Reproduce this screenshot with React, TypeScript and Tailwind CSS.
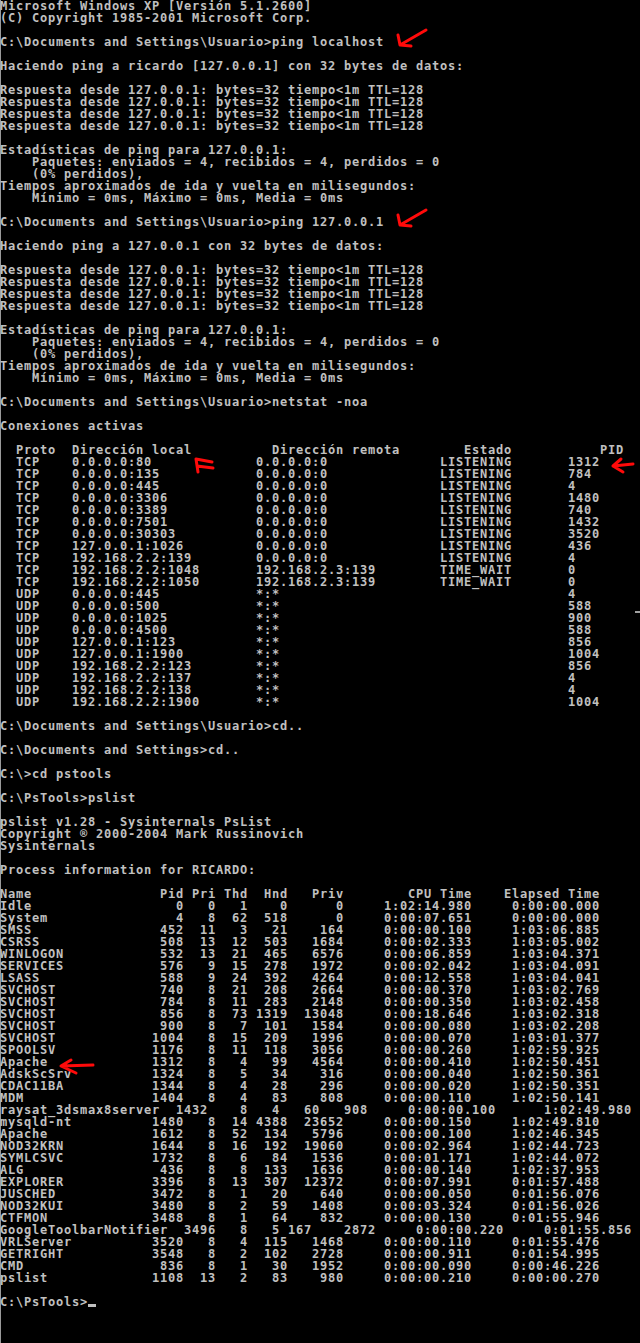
import React from 'react'

type Conn = [string, string, string, string, string]
type Proc = [string, string, string, string, string, string, string, string]

const conns: Conn[] = [
  ['TCP', '0.0.0.0:80', '0.0.0.0:0', 'LISTENING', '1312'],
  ['TCP', '0.0.0.0:135', '0.0.0.0:0', 'LISTENING', '784'],
  ['TCP', '0.0.0.0:445', '0.0.0.0:0', 'LISTENING', '4'],
  ['TCP', '0.0.0.0:3306', '0.0.0.0:0', 'LISTENING', '1480'],
  ['TCP', '0.0.0.0:3389', '0.0.0.0:0', 'LISTENING', '740'],
  ['TCP', '0.0.0.0:7501', '0.0.0.0:0', 'LISTENING', '1432'],
  ['TCP', '0.0.0.0:30303', '0.0.0.0:0', 'LISTENING', '3520'],
  ['TCP', '127.0.0.1:1026', '0.0.0.0:0', 'LISTENING', '436'],
  ['TCP', '192.168.2.2:139', '0.0.0.0:0', 'LISTENING', '4'],
  ['TCP', '192.168.2.2:1048', '192.168.2.3:139', 'TIME_WAIT', '0'],
  ['TCP', '192.168.2.2:1050', '192.168.2.3:139', 'TIME_WAIT', '0'],
  ['UDP', '0.0.0.0:445', '*:*', '', '4'],
  ['UDP', '0.0.0.0:500', '*:*', '', '588'],
  ['UDP', '0.0.0.0:1025', '*:*', '', '900'],
  ['UDP', '0.0.0.0:4500', '*:*', '', '588'],
  ['UDP', '127.0.0.1:123', '*:*', '', '856'],
  ['UDP', '127.0.0.1:1900', '*:*', '', '1004'],
  ['UDP', '192.168.2.2:123', '*:*', '', '856'],
  ['UDP', '192.168.2.2:137', '*:*', '', '4'],
  ['UDP', '192.168.2.2:138', '*:*', '', '4'],
  ['UDP', '192.168.2.2:1900', '*:*', '', '1004'],
]

const procs: (Proc | string)[] = [
  ['Idle', '0', '0', '1', '0', '0', '1:02:14.980', '0:00:00.000'],
  ['System', '4', '8', '62', '518', '0', '0:00:07.651', '0:00:00.000'],
  ['SMSS', '452', '11', '3', '21', '164', '0:00:00.100', '1:03:06.885'],
  ['CSRSS', '508', '13', '12', '503', '1684', '0:00:02.333', '1:03:05.002'],
  ['WINLOGON', '532', '13', '21', '465', '6576', '0:00:06.859', '1:03:04.371'],
  ['SERVICES', '576', '9', '15', '278', '1972', '0:00:02.042', '1:03:04.091'],
  ['LSASS', '588', '9', '24', '392', '4264', '0:00:12.558', '1:03:04.041'],
  ['SVCHOST', '740', '8', '21', '208', '2664', '0:00:00.370', '1:03:02.769'],
  ['SVCHOST', '784', '8', '11', '283', '2148', '0:00:00.350', '1:03:02.458'],
  ['SVCHOST', '856', '8', '73', '1319', '13048', '0:00:18.646', '1:03:02.318'],
  ['SVCHOST', '900', '8', '7', '101', '1584', '0:00:00.080', '1:03:02.208'],
  ['SVCHOST', '1004', '8', '15', '209', '1996', '0:00:00.070', '1:03:01.377'],
  ['SPOOLSV', '1176', '8', '11', '118', '3056', '0:00:00.260', '1:02:59.925'],
  ['Apache', '1312', '8', '4', '99', '4564', '0:00:00.410', '1:02:50.451'],
  ['AdskScSrv', '1324', '8', '5', '34', '316', '0:00:00.040', '1:02:50.361'],
  ['CDAC11BA', '1344', '8', '4', '28', '296', '0:00:00.020', '1:02:50.351'],
  ['MDM', '1404', '8', '4', '83', '808', '0:00:00.110', '1:02:50.141'],
  'raysat_3dsmax8server  1432    8   4   60   908     0:00:00.100      1:02:49.980',
  ['mysqld-nt', '1480', '8', '14', '4388', '23652', '0:00:00.150', '1:02:49.810'],
  ['Apache', '1612', '8', '52', '134', '5796', '0:00:00.100', '1:02:46.345'],
  ['NOD32KRN', '1644', '8', '16', '192', '19060', '0:00:02.964', '1:02:44.723'],
  ['SYMLCSVC', '1732', '8', '6', '84', '1536', '0:00:01.171', '1:02:44.072'],
  ['ALG', '436', '8', '8', '133', '1636', '0:00:00.140', '1:02:37.953'],
  ['EXPLORER', '3396', '8', '13', '307', '12372', '0:00:07.991', '0:01:57.488'],
  ['JUSCHED', '3472', '8', '1', '20', '640', '0:00:00.050', '0:01:56.076'],
  ['NOD32KUI', '3480', '8', '2', '59', '1408', '0:00:03.324', '0:01:56.026'],
  ['CTFMON', '3488', '8', '1', '64', '832', '0:00:00.130', '0:01:55.946'],
  'GoogleToolbarNotifier  3496   8   5 167    2872     0:00:00.220     0:01:55.856',
  ['VRLServer', '3520', '8', '4', '115', '1468', '0:00:00.110', '0:01:55.476'],
  ['GETRIGHT', '3548', '8', '2', '102', '2728', '0:00:00.911', '0:01:54.995'],
  ['CMD', '836', '8', '1', '30', '1952', '0:00:00.090', '0:00:46.226'],
  ['pslist', '1108', '13', '2', '83', '980', '0:00:00.210', '0:00:00.270'],
]

function procLine(p: Proc) {
  return (
    p[0].padEnd(19) +
    p[1].padStart(4) +
    p[2].padStart(4) +
    p[3].padStart(4) +
    p[4].padStart(5) +
    p[5].padStart(7) +
    p[6].padStart(16) +
    p[7].padStart(16)
  )
}

function connLine(c: Conn) {
  return '  ' + c[0].padEnd(7) + c[1].padEnd(23) + c[2].padEnd(23) + c[3].padEnd(16) + c[4]
}

const ping = (host: string) => [
  'C:\\Documents and Settings\\Usuario>ping ' + host,
  '',
  host === 'localhost'
    ? 'Haciendo ping a ricardo [127.0.0.1] con 32 bytes de datos:'
    : 'Haciendo ping a 127.0.0.1 con 32 bytes de datos:',
  '',
  'Respuesta desde 127.0.0.1: bytes=32 tiempo<1m TTL=128',
  'Respuesta desde 127.0.0.1: bytes=32 tiempo<1m TTL=128',
  'Respuesta desde 127.0.0.1: bytes=32 tiempo<1m TTL=128',
  'Respuesta desde 127.0.0.1: bytes=32 tiempo<1m TTL=128',
  '',
  'Estadísticas de ping para 127.0.0.1:',
  '    Paquetes: enviados = 4, recibidos = 4, perdidos = 0',
  '    (0% perdidos),',
  'Tiempos aproximados de ida y vuelta en milisegundos:',
  '    Mínimo = 0ms, Máximo = 0ms, Media = 0ms',
  '',
]

const lines: string[] = [
  'Microsoft Windows XP [Versión 5.1.2600]',
  '(C) Copyright 1985-2001 Microsoft Corp.',
  '',
  ...ping('localhost'),
  ...ping('127.0.0.1'),
  'C:\\Documents and Settings\\Usuario>netstat -noa',
  '',
  'Conexiones activas',
  '',
  '  Proto  ' + 'Dirección local'.padEnd(25) + 'Dirección remota'.padEnd(24) + 'Estado'.padEnd(17) + 'PID',
  ...conns.map(connLine),
  '',
  'C:\\Documents and Settings\\Usuario>cd..',
  '',
  'C:\\Documents and Settings>cd..',
  '',
  'C:\\>cd pstools',
  '',
  'C:\\PsTools>pslist',
  '',
  'pslist v1.28 - Sysinternals PsList',
  'Copyright ® 2000-2004 Mark Russinovich',
  'Sysinternals',
  '',
  'Process information for RICARDO:',
  '',
  procLine(['Name', 'Pid', 'Pri', 'Thd', 'Hnd', 'Priv', 'CPU Time', 'Elapsed Time']),
  ...procs.map((p) => (typeof p === 'string' ? p : procLine(p))),
  '',
]

function Arrows() {
  // red marker strokes painted over the screenshot
  const red = { stroke: '#ff0a0a', strokeWidth: 3, fill: 'none', strokeLinecap: 'round' as const, strokeLinejoin: 'round' as const }
  return (
    <svg className="absolute inset-0 pointer-events-none" width="640" height="1343">
      <g {...red}>
        <path d="M426 30 L400 45 M400 45 L398 35 M400 45 L411 46" />
        <path d="M426 210 L400 225 M400 225 L398 215 M400 225 L411 226" />
        <path d="M196 459 L198 472 M196 459 L212 462 M197 466 L213 468" />
        <path d="M633 464 L613 466 M613 466 L621 459 M613 466 L623 472" />
        <path d="M93 1065 L61 1066 M61 1066 L71 1060 M61 1066 L76 1073" />
      </g>
    </svg>
  )
}

export default function App() {
  return (
    <div className="relative w-[640px] min-h-[1343px] bg-black overflow-hidden shadow-[inset_1px_0_0_#9a9a9a]">
      <div className="font-['DejaVu_Sans_Mono',monospace] text-[12px] tracking-[0.776px] leading-[12px] font-bold text-[#c0c0c0] whitespace-pre">
        {lines.map((l, i) => (
          <div key={i} className="h-[12px]">
            {l}
          </div>
        ))}
        <div className="h-[12px]">
          C:\PsTools&gt;
          <span className="inline-block w-[8px] h-[3px] bg-[#c0c0c0] relative top-[1px]" />
        </div>
      </div>
      <div className="absolute right-0 top-[611px] w-[5px] h-[2px] bg-[#a0a0a0]" />
      <Arrows />
    </div>
  )
}
